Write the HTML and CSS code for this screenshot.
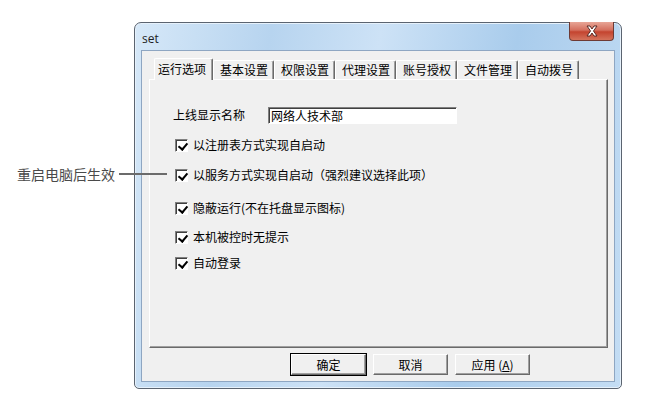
FILE: index.html
```html
<!DOCTYPE html>
<html lang="zh-CN">
<head>
    <meta charset="UTF-8">
    <title>set</title>
    <link rel="stylesheet" href="styles.css">
</head>
<body>
    <div class="note">
        <span class="note-text">重启电脑后生效</span>
        <i class="note-line"></i>
    </div>

    <div class="window">
        <div class="titlebar">
            <span class="title">set</span>
            <button class="close" type="button">
                <svg width="16" height="12" viewBox="0 0 16 12">
                    <path d="M3 1h3l2 3 2-3h3l-3.5 5 3.5 5h-3l-2-3-2 3H3l3.5-5z" fill="#fff" stroke="#5a2a25" stroke-width="1"/>
                </svg>
            </button>
        </div>

        <div class="client">
            <div class="tabs">
                <div class="tab active">运行选项</div>
                <div class="tab">基本设置</div>
                <div class="tab">权限设置</div>
                <div class="tab">代理设置</div>
                <div class="tab">账号授权</div>
                <div class="tab">文件管理</div>
                <div class="tab">自动拨号</div>
            </div>

            <div class="panel">
                <div class="row row-name">
                    <span class="field-label">上线显示名称</span>
                    <input class="name-input" type="text" value="网络人技术部">
                </div>
                <label class="row check row-a"><span class="box"></span>以注册表方式实现自启动</label>
                <label class="row check row-b"><span class="box"></span>以服务方式实现自启动（强烈建议选择此项）</label>
                <label class="row check row-c"><span class="box"></span>隐蔽运行(不在托盘显示图标)</label>
                <label class="row check row-d"><span class="box"></span>本机被控时无提示</label>
                <label class="row check row-e"><span class="box"></span>自动登录</label>
            </div>

            <div class="buttons">
                <button class="btn default" type="button">确定</button>
                <button class="btn" type="button">取消</button>
                <button class="btn" type="button">应用 (<u>A</u>)</button>
            </div>
        </div>
    </div>
</body>
</html>
```

FILE: styles.css
```css
* {
    box-sizing: border-box;
}
body {
    margin: 0;
    background: #fff;
    font-family: "Noto Sans CJK SC", "Liberation Sans", sans-serif;
    font-size: 12px;
    color: #000;
}

/* callout on the left */
.note {
    position: absolute;
    left: 17px;
    top: 165px;
    display: flex;
    align-items: center;
    z-index: 2;
}
.note-text {
    font-size: 14px;
    color: #4a4a4a;
    line-height: 18px;
}
.note-line {
    display: block;
    width: 48px;
    height: 2px;
    margin-left: 4px;
    background: #6b6b6b;
}

/* aero frame */
.window {
    margin: 22px 0 0 134px;
    width: 488px;
    height: 367px;
    border: 1px solid #5b6470;
    border-radius: 7px 7px 5px 5px;
    background: linear-gradient(100deg, #d6e8f8 0%, #b7d4ef 25%, #cde2f6 45%, #a9ccec 70%, #c4ddf4 100%);
    box-shadow: inset 0 0 0 1px #e6f1fb;
    display: flex;
    flex-direction: column;
    padding: 0 6px 6px;
}
.titlebar {
    height: 27px;
    display: flex;
    align-items: flex-start;
    justify-content: space-between;
}
.title {
    font-family: "Open Sans", "Noto Sans", sans-serif;
    font-size: 12px;
    color: #1e1e1e;
    margin: 7px 0 0 1px;
}
.close {
    width: 45px;
    height: 19px;
    margin: -1px 1px 0 0;
    border: 1px solid #6e3a34;
    border-top: none;
    border-radius: 0 0 4px 4px;
    background: linear-gradient(#e8a596 0%, #d46f5e 45%, #c4442f 55%, #d4735c 100%);
    display: flex;
    align-items: center;
    justify-content: center;
    padding: 0;
}

.client {
    flex: 1;
    border: 1px solid #8ea6c2;
    background: #f0f0f0;
    display: flex;
    flex-direction: column;
    padding: 7px 6px 6px 7px;
}

/* tab strip */
.tabs {
    display: flex;
    align-items: flex-end;
    height: 21px;
    padding-left: 5px;
    position: relative;
    z-index: 1;
}
.tab {
    height: 19px;
    line-height: 18px;
    padding: 0 5px 0 6px;
    border-top: 1px solid #fff;
    border-left: 1px solid #fff;
    border-right: 1px solid #6a6a6a;
    box-shadow: inset -1px 0 0 #a0a0a0;
    border-radius: 2px 2px 0 0;
    color: #000;
}
.tab.active {
    height: 22px;
    margin-bottom: -1px;
    line-height: 20px;
    padding: 0 6px 0 3px;
    background: #f0f0f0;
}

.panel {
    height: 269px;
    border-top: 1px solid #fff;
    border-left: 1px solid #fff;
    border-right: 1px solid #6a6a6a;
    border-bottom: 1px solid #6a6a6a;
    box-shadow: inset -1px -1px 0 #a0a0a0;
    display: flex;
    flex-direction: column;
    padding: 27px 0 0 23px;
}
.row {
    display: flex;
    align-items: flex-start;
    line-height: 16px;
    flex-shrink: 0;
}
.row-name { height: 30px; }
.row-a { height: 30px; margin-left: 2px; }
.row-b { height: 33px; margin-left: 2px; }
.row-c { height: 29px; margin-left: 2px; }
.row-d { height: 26px; margin-left: 2px; }
.row-e { height: 16px; margin-left: 2px; }

.field-label {
    width: 95px;
}
.name-input {
    width: 189px;
    height: 17px;
    margin: 0;
    padding: 0 2px;
    border: 1px solid;
    border-color: #808080 #fff #fff #808080;
    box-shadow: inset 1px 1px 0 #404040;
    font: inherit;
    line-height: 15px;
    background: #fff;
}

.box {
    width: 13px;
    height: 13px;
    margin: 2px 5px 0 0;
    border: 1px solid;
    border-color: #808080 #fff #fff #808080;
    box-shadow: inset 1px 1px 0 #404040;
    background: #fff;
    position: relative;
}
.box::after {
    content: "";
    position: absolute;
    left: 4px;
    top: 1px;
    width: 4px;
    height: 7px;
    border-right: 2px solid #000;
    border-bottom: 2px solid #000;
    transform: rotate(40deg);
}

/* dialog buttons */
.buttons {
    display: flex;
    gap: 7px;
    padding: 6px 0 0 142px;
}
.btn {
    width: 75px;
    height: 21px;
    padding: 0;
    font: inherit;
    line-height: 18px;
    background: #f0f0f0;
    border: 1px solid;
    border-color: #fff #6a6a6a #6a6a6a #fff;
    box-shadow: inset -1px -1px 0 #a0a0a0;
    color: #000;
}
.btn.default {
    outline: 1px solid #000;
}
```
